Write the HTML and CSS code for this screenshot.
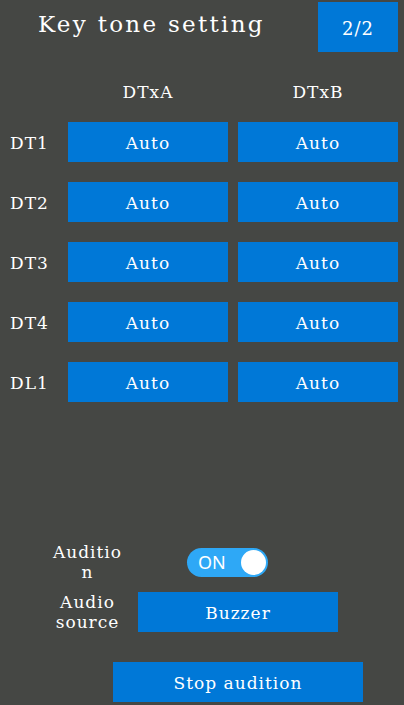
FILE: index.html
```html
<!DOCTYPE html>
<html>
<head>
  <title>Key tone setting</title>
  <link rel="stylesheet" href="styles.css">
</head>
<body>
  <div class="screen">
    <header class="top-bar">
      <h1 class="title">Key tone setting</h1>
      <button type="button" class="page-btn">2/2</button>
    </header>

    <div class="tone-grid">
      <span></span>
      <span class="col-head">DTxA</span>
      <span class="col-head">DTxB</span>

      <span class="row-label">DT1</span>
      <button type="button" class="tone-btn">Auto</button>
      <button type="button" class="tone-btn">Auto</button>

      <span class="row-label">DT2</span>
      <button type="button" class="tone-btn">Auto</button>
      <button type="button" class="tone-btn">Auto</button>

      <span class="row-label">DT3</span>
      <button type="button" class="tone-btn">Auto</button>
      <button type="button" class="tone-btn">Auto</button>

      <span class="row-label">DT4</span>
      <button type="button" class="tone-btn">Auto</button>
      <button type="button" class="tone-btn">Auto</button>

      <span class="row-label">DL1</span>
      <button type="button" class="tone-btn">Auto</button>
      <button type="button" class="tone-btn">Auto</button>
    </div>

    <div class="audition">
      <div class="opt-row">
        <span class="opt-label">Audition</span>
        <div class="switch">
          <span class="switch-text">ON</span>
          <span class="knob"></span>
        </div>
      </div>
      <div class="opt-row">
        <span class="opt-label">Audio source</span>
        <button type="button" class="source-btn">Buzzer</button>
      </div>
      <button type="button" class="stop-btn">Stop audition</button>
    </div>
  </div>
</body>
</html>
```

FILE: styles.css
```css
html, body {
  margin: 0;
  padding: 0;
  background: #454744;
}
.screen {
  width: 404px;
  height: 705px;
  color: #fff;
  font-family: "DejaVu Serif", serif;
  font-size: 17px;
  letter-spacing: 1px;
  display: flex;
  flex-direction: column;
}
button {
  font-family: inherit;
  letter-spacing: inherit;
  color: #fff;
  background: #0078d7;
  border: none;
  padding: 2px 0 0 0;
  margin: 0;
  font-size: 17px;
}
.top-bar {
  display: flex;
  align-items: flex-start;
  padding: 2px 6px 0 38px;
  height: 50px;
}
.title {
  margin: 7px 0 0 0;
  font-weight: normal;
  font-size: 23px;
  line-height: 30px;
  letter-spacing: 2.3px;
}
.page-btn {
  margin-left: auto;
  width: 80px;
  height: 50px;
  font-size: 18px;
}
.tone-grid {
  display: grid;
  grid-template-columns: 48px 160px 160px;
  grid-template-rows: 20px;
  grid-auto-rows: 40px;
  column-gap: 10px;
  row-gap: 20px;
  padding-left: 10px;
  margin-top: 30px;
}
.col-head {
  text-align: center;
  line-height: 20px;
}
.row-label {
  line-height: 40px;
  padding-top: 1px;
}
.tone-btn {
  height: 40px;
}
.audition {
  margin-top: 140px;
  display: flex;
  flex-direction: column;
}
.opt-row {
  display: flex;
  align-items: center;
  padding-left: 49px;
  height: 40px;
  margin-bottom: 10px;
}
.opt-label {
  width: 77px;
  text-align: center;
  line-height: 20px;
  overflow-wrap: anywhere;
}
.switch {
  margin-left: 61px;
  width: 81px;
  height: 29px;
  border-radius: 15px;
  background: #2ea8f6;
  display: flex;
  align-items: center;
  justify-content: space-between;
  padding: 0 2px 0 11px;
  box-sizing: border-box;
  letter-spacing: 0;
}
.switch-text {
  font-family: "Noto Sans", sans-serif;
  font-size: 18px;
}
.knob {
  width: 25px;
  height: 25px;
  border-radius: 50%;
  background: #fff;
}
.source-btn {
  margin-left: 12px;
  width: 200px;
  height: 40px;
}
.stop-btn {
  margin: 20px 0 0 113px;
  width: 250px;
  height: 40px;
}
```
